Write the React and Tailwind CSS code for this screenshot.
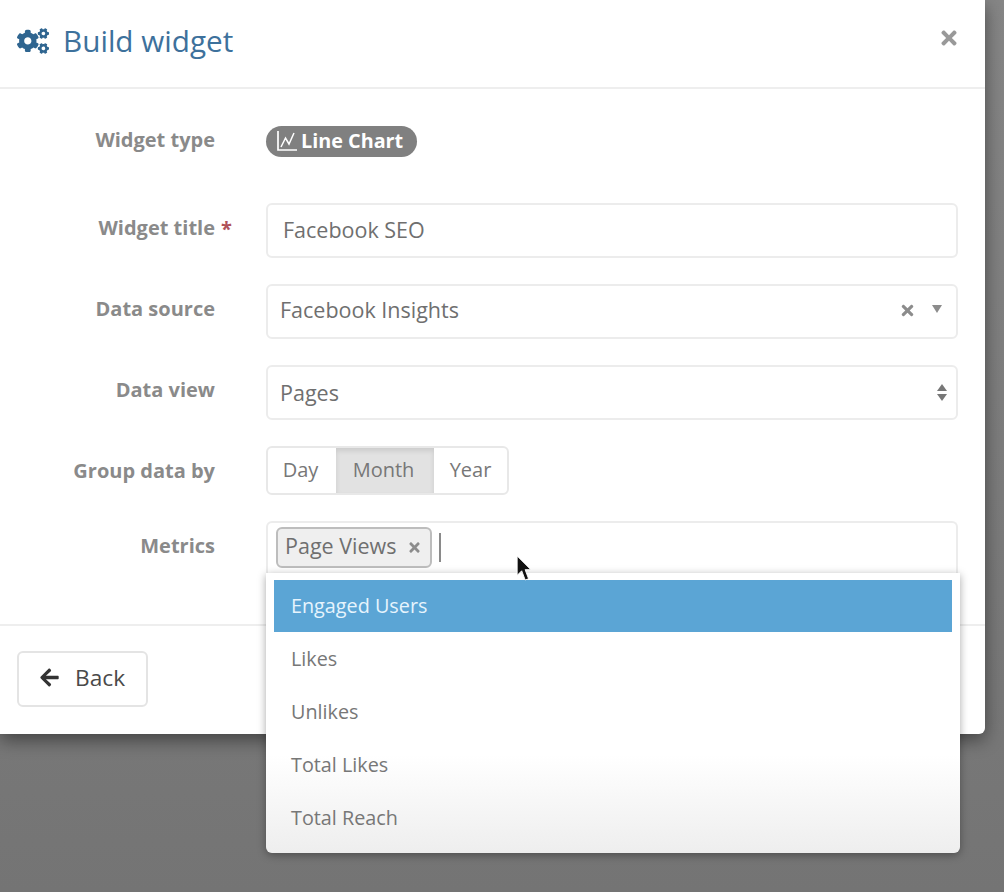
import React from "react";
import { FaCogs, FaTimes, FaArrowLeft } from "react-icons/fa";

function Row({ label, req, className = "", children, labelClass = "" }) {
  return (
    <div className={`flex ${className}`}>
      <div className={`w-[215px] mr-[51px] shrink-0 text-right text-[20px] font-bold text-[#8a8a8a] ${labelClass}`}>
        <span className="relative">
          {label}
          {req && <span className="absolute left-full top-0 ml-[6px] text-[#b0525a]">*</span>}
        </span>
      </div>
      {children}
    </div>
  );
}

export default function App() {
  return (
    <div className="relative w-[1004px] h-[892px] overflow-hidden bg-gradient-to-b from-[#868686] to-[#747474] font-['Open_Sans',sans-serif]">
      <div className="w-[985px] h-[734px] flex flex-col bg-white rounded-br-md shadow-[0_6px_18px_rgba(0,0,0,0.45)]">
        <header className="h-[89px] shrink-0 flex items-center justify-between pl-[17px] pr-[25px] border-b-2 border-[#eeeeee]">
          <div className="flex items-center gap-[14px] -mt-[5px]">
            <FaCogs className="w-[32px] h-[32px] text-[#2f6590]" />
            <h1 className="text-[29.7px] leading-none text-[#3d719c]">Build widget</h1>
          </div>
          <FaTimes className="w-[22px] h-[22px] text-[#999999] -mt-[11px]" />
        </header>

        <main className="flex-1 pt-[37px] border-b-2 border-[#eeeeee]">
          <Row label="Widget type" className="h-[31px] items-center" labelClass="-mt-[4px]">
            <span className="h-[31px] w-[151px] flex items-center pl-[10px] gap-[3px] rounded-full bg-[#808080] text-white text-[19.8px] font-bold">
              <svg viewBox="0 0 22 22" className="w-[22px] h-[22px] -mt-[2px]" fill="none" stroke="currentColor" strokeWidth="1.7">
                <path d="M2 1 V20 H21" />
                <path d="M5 17 L9.5 8 L13 14 L18 3" strokeWidth="1.5" />
              </svg>
              <span className="-mt-[1px]">Line Chart</span>
            </span>
          </Row>

          <Row label="Widget title" req className="mt-[46px]" labelClass="pt-[10px]">
            <div className="w-[692px] h-[55px] flex items-center pl-[15px] border-2 border-[#ececec] rounded-md text-[21.5px] text-[#6f6f6f]">
              Facebook SEO
            </div>
          </Row>

          <Row label="Data source" className="mt-[26px]" labelClass="pt-[10px]">
            <div className="w-[692px] h-[55px] flex items-center justify-between pl-[12px] pr-[14px] border-2 border-[#ececec] rounded-md text-[21.5px] text-[#6f6f6f]">
              <span className="-mt-[3px]">Facebook Insights</span>
              <span className="flex items-center gap-[16px] -mt-[2px]">
                <FaTimes className="w-[17px] h-[17px] text-[#8c8c8c]" />
                <span className="w-0 h-0 -mt-[4px] border-x-[5px] border-x-transparent border-t-[8px] border-t-[#8c8c8c]" />
              </span>
            </div>
          </Row>

          <Row label="Data view" className="mt-[26px]" labelClass="pt-[10px]">
            <div className="w-[692px] h-[55px] flex items-center justify-between pl-[12px] pr-[9px] border-2 border-[#ececec] rounded-md text-[21.5px] text-[#6f6f6f]">
              <span className="mt-[1px]">Pages</span>
              <span className="flex flex-col gap-[3px]">
                <span className="w-0 h-0 border-x-[5px] border-x-transparent border-b-[7px] border-b-[#777777]" />
                <span className="w-0 h-0 border-x-[5px] border-x-transparent border-t-[7px] border-t-[#777777]" />
              </span>
            </div>
          </Row>

          <Row label="Group data by" className="mt-[26px]" labelClass="pt-[10px]">
            <div className="w-[243px] h-[49px] flex border-2 border-[#e8e8e8] rounded-md text-[20px] text-[#777777]">
              <span className="w-[68px] flex items-center justify-center pr-[3px] -mt-[1px]">Day</span>
              <span className="w-[98px] flex items-center justify-center pr-[3px] pb-[2px] bg-[#e2e2e2] shadow-[inset_0_3px_5px_rgba(0,0,0,0.1)]">Month</span>
              <span className="flex-1 flex items-center justify-center -mt-[1px]">Year</span>
            </div>
          </Row>

          <Row label="Metrics" className="mt-[26px]" labelClass="pt-[10px]">
            <div className="relative w-[692px] h-[54px] pt-[4px] pl-[8px] border-2 border-b-0 border-[#ececec] rounded-t-md flex items-start gap-[7px]">
              <span className="w-[156px] h-[41px] flex items-center justify-between pl-[7px] pr-[8px] bg-[#efefef] border-2 border-[#bdbdbd] rounded-md text-[21.5px] text-[#6f6f6f]">
                <span className="-mt-[2px]">Page Views</span>
                <FaTimes className="w-[15px] h-[15px] text-[#8c8c8c]" />
              </span>
              <span className="w-[2px] h-[29px] mt-[6px] bg-[#8a8a8a]" />

              <svg viewBox="0 0 14 24" className="absolute left-[248px] top-[31px] w-[16px] h-[29px] z-20">
                <path d="M1 1 L1 18 L5 14 L8 22 L11 21 L8 13 L13 13 Z" fill="#111111" stroke="#ffffff" strokeWidth="0.8" />
              </svg>

              <div className="absolute z-10 -left-[2px] top-[50px] w-[694px] h-[280px] pt-[7px] px-[8px] rounded-b-md bg-gradient-to-b from-white from-65% to-[#eeeeee] shadow-[0_2px_8px_rgba(0,0,0,0.35)] text-[19.8px] text-[#777777]">
                <div className="w-[678px] h-[52px] flex items-center pl-[17px] bg-[#5ba5d5] text-[#e6f4fd]">Engaged Users</div>
                {["Likes", "Unlikes", "Total Likes", "Total Reach"].map((t) => (
                  <div key={t} className="h-[53px] flex items-center pl-[17px]">{t}</div>
                ))}
              </div>
            </div>
          </Row>
        </main>

        <footer className="h-[108px] shrink-0 pt-[25px] pl-[17px]">
          <button className="w-[131px] h-[56px] flex items-center pl-[20px] gap-[15px] border-2 border-[#e4e4e4] rounded-md bg-white text-[22.7px] text-[#4a4a4a]">
            <FaArrowLeft className="w-[21px] h-[21px] text-[#333333] -mt-[3px]" />
            <span className="-mt-[1px]">Back</span>
          </button>
        </footer>
      </div>
    </div>
  );
}
